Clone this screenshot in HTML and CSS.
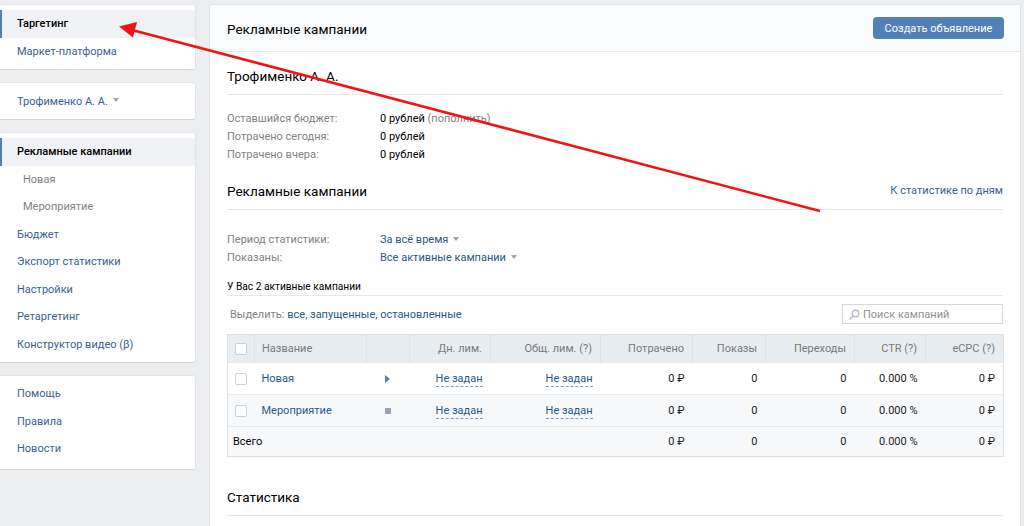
FILE: index.html
```html
<!DOCTYPE html>
<html lang="ru">
<head>
<meta charset="utf-8">
<link rel="stylesheet" href="styles.css">
</head>
<body>
<div class="page">
  <aside class="sidebar">
    <nav class="card menu">
      <a class="item selected">Таргетинг</a>
      <a class="item">Маркет-платформа</a>
    </nav>
    <div class="card account">
      <span class="account-name">Трофименко А. А.</span><span class="caret"></span>
    </div>
    <nav class="card menu">
      <a class="item selected">Рекламные кампании</a>
      <a class="item sub">Новая</a>
      <a class="item sub">Мероприятие</a>
      <a class="item">Бюджет</a>
      <a class="item">Экспорт статистики</a>
      <a class="item">Настройки</a>
      <a class="item">Ретаргетинг</a>
      <a class="item">Конструктор видео (β)</a>
    </nav>
    <nav class="card menu menu-last">
      <a class="item">Помощь</a>
      <a class="item">Правила</a>
      <a class="item">Новости</a>
    </nav>
  </aside>

  <main class="card main">
    <header class="main-head">
      <h1 class="main-title">Рекламные кампании</h1>
      <button class="btn">Создать объявление</button>
    </header>
    <div class="main-body">
      <div class="sec-head"><h2 class="sec-title">Трофименко А. А.</h2></div>
      <div class="info">
        <div class="info-row"><span class="lbl">Оставшийся бюджет:</span><span class="val">0 рублей <span class="muted">(пополнить)</span></span></div>
        <div class="info-row"><span class="lbl">Потрачено сегодня:</span><span class="val">0 рублей</span></div>
        <div class="info-row"><span class="lbl">Потрачено вчера:</span><span class="val">0 рублей</span></div>
      </div>

      <div class="sec-head"><h2 class="sec-title">Рекламные кампании</h2><a class="sec-link">К статистике по дням</a></div>
      <div class="filters">
        <div class="info-row"><span class="lbl">Период статистики:</span><span class="link">За всё время<span class="caret"></span></span></div>
        <div class="info-row"><span class="lbl">Показаны:</span><span class="link">Все активные кампании<span class="caret"></span></span></div>
      </div>
      <div class="count">У Вас 2 активные кампании</div>
      <div class="toolbar">
        <div class="select-links"><span class="grey">Выделить:</span> <a class="link">все</a>, <a class="link">запущенные</a>, <a class="link">остановленные</a></div>
        <label class="search">
          <svg class="search-ico" width="11" height="11" viewBox="0 0 11 11"><circle cx="6.5" cy="4.5" r="3.3" fill="none" stroke="#b4bcc6" stroke-width="1.4"/><path d="M4.2 6.8 L1 10" stroke="#b4bcc6" stroke-width="1.6" stroke-linecap="round"/></svg>
          <span class="placeholder">Поиск кампаний</span>
        </label>
      </div>

      <table class="grid">
        <colgroup>
          <col style="width:27px"><col style="width:112px"><col style="width:43px"><col style="width:81px"><col style="width:110px"><col style="width:92px"><col style="width:73px"><col style="width:89px"><col style="width:71px"><col style="width:78px">
        </colgroup>
        <thead>
          <tr>
            <th class="c-chk"><span class="chk"></span></th>
            <th class="c-name">Название</th>
            <th></th>
            <th>Дн. лим.</th>
            <th>Общ. лим. (?)</th>
            <th>Потрачено</th>
            <th>Показы</th>
            <th>Переходы</th>
            <th>CTR (?)</th>
            <th>eCPC (?)</th>
          </tr>
        </thead>
        <tbody>
          <tr class="row">
            <td class="c-chk"><span class="chk"></span></td>
            <td class="c-name"><a class="link">Новая</a></td>
            <td class="c-st"><span class="play"></span></td>
            <td><span class="dash">Не задан</span></td>
            <td><span class="dash">Не задан</span></td>
            <td>0 ₽</td><td>0</td><td>0</td><td>0.000 %</td><td>0 ₽</td>
          </tr>
          <tr class="row alt">
            <td class="c-chk"><span class="chk"></span></td>
            <td class="c-name"><a class="link">Мероприятие</a></td>
            <td class="c-st"><span class="stop"></span></td>
            <td><span class="dash">Не задан</span></td>
            <td><span class="dash">Не задан</span></td>
            <td>0 ₽</td><td>0</td><td>0</td><td>0.000 %</td><td>0 ₽</td>
          </tr>
          <tr class="row total">
            <td class="c-total" colspan="5">Всего</td>
            <td>0 ₽</td><td>0</td><td>0</td><td>0.000 %</td><td>0 ₽</td>
          </tr>
        </tbody>
      </table>

      <div class="sec-head stat-head"><h2 class="sec-title">Статистика</h2></div>
    </div>
  </main>
</div>

<svg class="arrow" width="1024" height="526" viewBox="0 0 1024 526">
  <line x1="820" y1="211" x2="132" y2="30" stroke="#f01414" stroke-width="2.6"/>
  <polygon points="119,26.5 137,22 133,37.5" fill="#f01414"/>
</svg>
</body>
</html>
```

FILE: styles.css
```css
* { box-sizing: border-box; }
html, body { margin: 0; padding: 0; }
body {
  background: #edeef0;
  font-family: Roboto, "Open Sans", "Liberation Sans", sans-serif;
  font-size: 11px;
  color: #000;
  width: 1024px;
  height: 526px;
  overflow: hidden;
  position: relative;
}
a { text-decoration: none; cursor: pointer; }
h1, h2 { margin: 0; font-weight: 400; }

.page {
  display: flex;
  gap: 15px;
  padding-top: 5px;
  align-items: flex-start;
}

.card {
  background: #fff;
  border-radius: 0 2px 2px 0;
  box-shadow: 0 1px 0 0 #d7d8db, 0 0 0 1px #e3e4e8;
}

.sidebar {
  width: 195px;
  flex: none;
  display: flex;
  flex-direction: column;
  gap: 14px;
}
.menu { padding: 5px 0 4px; }
.menu-last { padding-top: 4px; padding-bottom: 6px; }
.item {
  display: flex;
  align-items: center;
  height: 27.5px;
  padding-left: 17px;
  color: #3b6192;
  font-size: 11px;
}
.item.selected {
  background: #f0f2f5;
  color: #000;
  font-weight: 500;
  box-shadow: inset 2px 0 0 #5181b8;
}
.item.sub { padding-left: 23px; color: #828282; }

.account {
  height: 36px;
  display: flex;
  align-items: center;
  padding-left: 17px;
  color: #3b6192;
}
.caret {
  display: inline-block;
  width: 0; height: 0;
  border-left: 3.5px solid transparent;
  border-right: 3.5px solid transparent;
  border-top: 4px solid #99a5b3;
  margin-left: 5px;
  vertical-align: middle;
  position: relative;
  top: -1px;
}

.main {
  width: 810px;
  flex: none;
  height: 540px;
  border-radius: 2px;
}
.main-head {
  height: 47px;
  background: #fafbfc;
  border-bottom: 1px solid #e7e8ec;
  display: flex;
  align-items: center;
  justify-content: space-between;
  padding: 0 16px 0 17px;
  border-radius: 2px 2px 0 0;
}
.main-title { font-size: 13.5px; color: #000; padding-top: 1px; }
.btn {
  background: #5181b8;
  color: #fff;
  border: 0;
  border-radius: 4px;
  height: 22px;
  width: 131px;
  font-family: inherit;
  font-size: 11px;
  padding: 0;
}

.main-body { padding: 0 17px; }
.sec-head {
  display: flex;
  align-items: center;
  justify-content: space-between;
  padding: 14px 0 8px;
  border-bottom: 1px solid #e7e8ec;
  line-height: 20px;
}
.sec-title { font-size: 13.5px; color: #000; }
.sec-link { color: #3b6192; font-size: 11px; }

.info { padding: 15px 0 3px; }
.info-row { display: flex; line-height: 18px; }
.lbl { width: 153px; color: #828282; flex: none; }
.val { color: #000; }
.muted { color: #828282; }
.link { color: #2a5885; }
.grey { color: #828282; }

.filters { padding-top: 21px; }
.count {
  margin-top: 12px;
  font-size: 10.2px;
  line-height: 16px;
  color: #000;
  border-bottom: 1px solid #e7e8ec;
}
.toolbar {
  display: flex;
  justify-content: space-between;
  align-items: center;
  padding: 8px 0 10px;
}
.select-links { padding-left: 3px; color: #2a5885; }
.search {
  width: 161px;
  height: 20px;
  border: 1px solid #d3d9de;
  display: flex;
  align-items: center;
  padding-left: 6px;
  gap: 3px;
  color: #929292;
}
.search-ico { flex: none; }

.grid {
  width: 776px;
  border-collapse: collapse;
  table-layout: fixed;
  border: 1px solid #dce1e6;
}
.grid th {
  background: #e8edf2;
  height: 28px;
  font-weight: 400;
  color: #7a7a7a;
  text-align: right;
  padding: 0 8px;
  border-left: 1px solid #dce3ea;
  white-space: nowrap;
}
.grid th:first-child { border-left: 0; }
.grid td {
  text-align: right;
  padding: 0 8px;
  height: 32px;
  white-space: nowrap;
  color: #222;
}
.grid .c-chk { text-align: left; padding-left: 7px; padding-right: 0; }
.grid .c-name { text-align: left; padding-left: 7px; }
.grid th.c-name { color: #7a7a7a; }
.grid .c-st { text-align: left; padding-left: 18px; }
.grid .c-total { text-align: left; padding-left: 5px; color: #000; }
.row { border-top: 1px solid #e7e8ec; }
.row.alt, .row.total { background: #f7f8fa; }
.row.total td { height: 30px; }

.chk {
  display: inline-block;
  width: 12px; height: 12px;
  border: 1px solid #c9d1d9;
  background: #fff;
  border-radius: 2px;
  vertical-align: middle;
}
.play {
  display: inline-block;
  width: 0; height: 0;
  border-top: 4.5px solid transparent;
  border-bottom: 4.5px solid transparent;
  border-left: 5px solid #5f7fa3;
  vertical-align: middle;
}
.stop {
  display: inline-block;
  width: 6px; height: 6px;
  background: #9aa6b4;
  vertical-align: middle;
}
.dash {
  color: #2a5885;
  border-bottom: 1px dashed #7d9cc0;
  padding-bottom: 1px;
}

.stat-head { margin-top: 16px; }

.arrow {
  position: absolute;
  left: 0; top: 0;
  pointer-events: none;
}
```
